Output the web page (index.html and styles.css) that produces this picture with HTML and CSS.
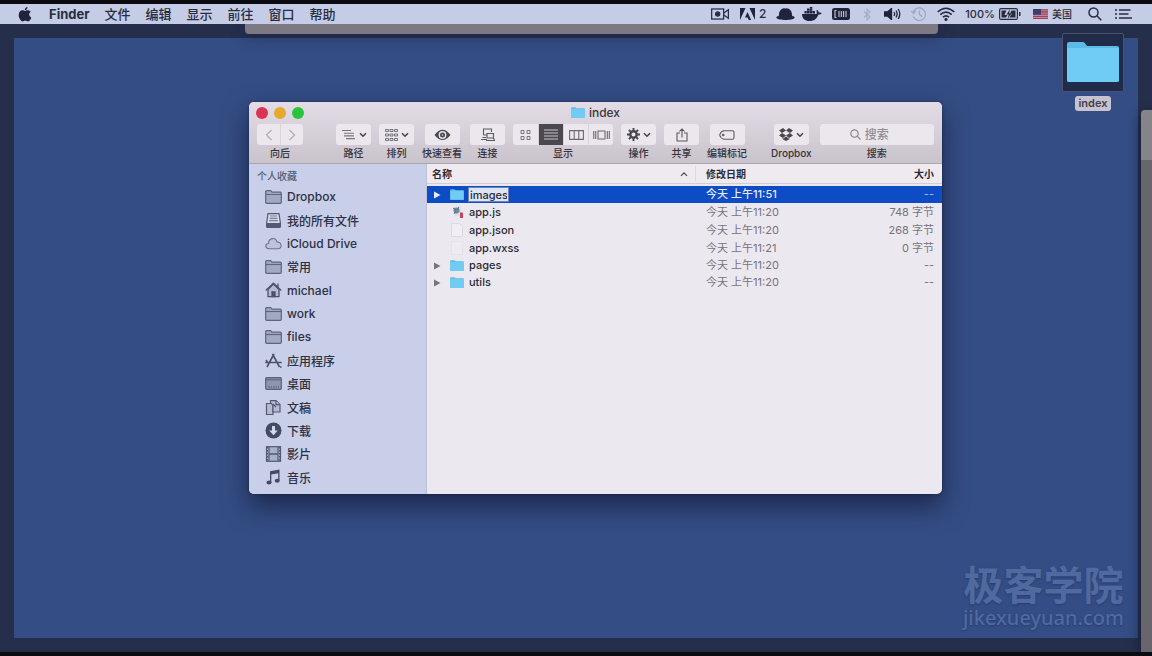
FILE: index.html
```html
<!DOCTYPE html>
<html lang="zh-CN">
<head>
<meta charset="utf-8">
<title>Finder</title>
<link rel="stylesheet" href="styles.css">
</head>
<body>
<svg class="defs" aria-hidden="true">
  <symbol id="folder-blue" viewBox="0 0 54 42"><path d="M1 3q0-2 2-2h14q1.500 0 2.500 2l1.500 2H51q2 0 2 2v32q0 2-2 2H3q-2 0-2-2z" fill="#5db9e6"/><path d="M1 7h52v32q0 2-2 2H3q-2 0-2-2z" fill="#70ccf4"/></symbol>
  <symbol id="folder-side" viewBox="0 0 17 14"><path d="M.7 12.300V1.700q0-1 1-1h4l1.300 1.500h8.300q1 0 1 1v9.100q0 1-1 1H1.700q-1 0-1-1z" fill="#a2aac2" stroke="#5d667e" stroke-width="1.200"/><path d="M1 4.500h15" stroke="#5d667e" stroke-width="1.200"/></symbol>
  <symbol id="chevron" viewBox="0 0 8 6"><path d="M1 1.200l3 3 3-3" fill="none" stroke="#47444c" stroke-width="1.500"/></symbol>
</svg>

<header class="menubar">
  <nav class="menus" aria-label="菜单">
    <button class="menu apple" aria-label="Apple"><svg width="14" height="15" viewBox="0 0 14 15"><path d="M9.500 0c.1 1.700-1.200 3.100-2.700 3.200C6.700 1.700 8 .2 9.500 0zM7 4c.8 0 1.500-.7 2.900-.7 1.100 0 2.200.6 2.900 1.500-2.400 1.500-2 4.600.6 5.600-.6 1.700-2 4-3.400 4-1 0-1.400-.6-2.700-.6s-1.800.6-2.700.6C2.900 14.400.7 11 .7 8c0-3 1.800-4.700 3.700-4.700C5.600 3.300 6.400 4 7 4z" fill="#20233a"/></svg></button>
    <button class="menu app-name">Finder</button>
    <button class="menu">文件</button>
    <button class="menu">编辑</button>
    <button class="menu">显示</button>
    <button class="menu">前往</button>
    <button class="menu">窗口</button>
    <button class="menu">帮助</button>
  </nav>
  <div class="status">
    <svg width="19" height="12" viewBox="0 0 20 12" fill="none" stroke="#292c40" stroke-width="1.300"><rect x=".7" y=".7" width="12.600" height="10.600"/><circle cx="7" cy="6" r="2.200" fill="#292c40"/><path d="M13.500 5l4.800-3.500v9L13.500 7"/></svg>
    <span class="pair"><svg width="15" height="12" viewBox="0 0 15 12" fill="#20233a"><path d="M0 0h5.500L0 12zM9.500 0H15v12zM7.500 4l3.600 8H8.700l-1-2.500H5z"/></svg>2</span>
    <svg width="19" height="14" viewBox="0 0 20 14" fill="#20233a"><path d="M3 9C3 3 6 1 9 1q1 .5 2 0C14.500 1 17 4 17 9c2 .3 3 1.300 2.500 2.300C18 14 2 14 .5 11.300 0 10 1 9.300 3 9z"/></svg>
    <svg class="whale" width="20" height="14" viewBox="0 0 20 14" fill="#20233a"><path d="M0 7h14.500c.6-1 .4-2.300-.3-3.200l1-.9c1 .7 1.500 1.500 1.500 2.500 1 0 2 0 3 .6-.7 1.300-2 1.600-3.300 1.500C14.800 12 12 14 7.500 14 3 14 0 11.500 0 7zM2.500 4h2.200v2.500H2.500zM5 4h2.500v2.500H5zM7.800 4h2.500v2.500H7.800zM5 1.500h2.500v2.200H5zM7.800 1.500h2.500v2.200H7.800zM10.600 4H13v2.500h-2.400zM7.800 0h2.500v1.200H7.800z"/></svg>
    <svg width="18" height="12" viewBox="0 0 18 12"><rect width="18" height="12" rx="2.500" fill="#20233a"/><path d="M4.500 2.500H3v7h1.500M7 3v6M9.300 3v6M11.600 3v6M14 3v6" fill="none" stroke="#c3c8dd" stroke-width="1.100"/></svg>
    <svg class="slim" width="8" height="13" viewBox="0 0 8 13" fill="none" stroke="#a6acc4" stroke-width="1.100"><path d="M1 3.500l6 5.500-3 3V1l3 3-6 5.500"/></svg>
    <svg width="17" height="12" viewBox="0 0 17 12" fill="none" stroke="#20233a" stroke-width="1.300"><path d="M.5 4h3l4-3.500v11L3.500 8h-3z" fill="#20233a"/><path d="M10 4q1.300 2 0 4M12 2.500q2.300 3.500 0 7M14.200 1q3.200 5 0 10"/></svg>
    <svg width="16" height="15" viewBox="0 0 16 15" fill="none" stroke="#a0a5bb" stroke-width="1.200"><path d="M2.300 9.500A6.300 6.300 0 1 0 2.300 5M.3 4l2 2.600L4.800 4M8.300 3.500v4l3 2"/></svg>
    <svg width="18" height="14" viewBox="0 0 18 14" fill="none" stroke="#292c40" stroke-width="1.600"><path d="M.7 5q8.300-7.500 16.600 0M3.300 7.600q5.700-5 11.400 0M5.900 10.200q3.100-2.700 6.200 0"/><circle cx="9" cy="12.400" r=".8" fill="#292c40"/></svg>
    <span class="pair percent">100%<svg width="22" height="12" viewBox="0 0 22 12"><rect x=".6" y=".6" width="17.800" height="10.800" rx="1.500" fill="#c5cbe0" stroke="#292c40" stroke-width="1.200"/><path d="M2.500 2.500h5L5.500 7h3L7 9.500H2.500zM12.500 2.500h4v7h-6l2.500-4h-2zM20 4h1.500v4H20z" fill="#292c40"/><path d="M11 1L7.500 6.500h2.300L8.700 11l4-5.700h-2.500z" fill="#292c40"/></svg></span>
    <span class="pair locale"><svg width="15" height="10" viewBox="0 0 15 10"><rect width="15" height="10" fill="#c9a3b2"/><path d="M0 .8h15M0 3h15M0 5.200h15M0 7.300h15M0 9.400h15" stroke="#a43f59" stroke-width="1.300"/><rect width="8" height="5.700" fill="#3c3c75"/></svg>美国</span>
    <svg class="find" width="14" height="14" viewBox="0 0 14 14" fill="none" stroke="#292c40" stroke-width="1.500"><circle cx="5.500" cy="5.500" r="4.500"/><path d="M8.800 8.800l4.500 4.500"/></svg>
    <svg width="17" height="12" viewBox="0 0 17 12" stroke="#292c40" stroke-width="1.700"><path d="M0 2h2M4 2h11.500M0 6h2M4 6h9.500M0 10h2M4 10h13"/></svg>
  </div>
</header>

<main class="desktop">
  <div class="wallpaper"></div>
  <div class="back-window top-strip"></div>
  <div class="back-window side-strip"></div>

  <button class="desk-icon">
    <span class="desk-thumb"><svg width="54" height="42"><use href="#folder-blue"/></svg></span>
    <span class="desk-label">index</span>
  </button>

  <div class="watermark"><span class="wm-name">极客学院</span><span class="wm-site">jikexueyuan.com</span></div>

  <section class="window" aria-label="index">
    <div class="chrome">
      <div class="titlebar">
        <div class="lights">
          <button class="light close" aria-label="关闭"></button>
          <button class="light minimise" aria-label="最小化"></button>
          <button class="light zoom" aria-label="缩放"></button>
        </div>
        <h1 class="title"><svg width="14" height="11"><use href="#folder-blue"/></svg>index</h1>
      </div>
      <div class="toolbar">
        <div class="tool nav-tool">
          <div class="segments">
            <button class="seg" aria-label="后退"><svg width="8" height="12" viewBox="0 0 8 12"><path d="M6.500 1L1.500 6l5 5" fill="none" stroke="#b3afb6" stroke-width="1.300"/></svg></button>
            <button class="seg" aria-label="前进"><svg width="8" height="12" viewBox="0 0 8 12"><path d="M1.500 1l5 5-5 5" fill="none" stroke="#b3afb6" stroke-width="1.300"/></svg></button>
          </div>
          <span>向后</span>
        </div>
        <div class="tool"><button class="btn" aria-label="路径"><svg width="15" height="11" viewBox="0 0 15 11"><path d="M1 1.500h9M3 4.200h10M3 6.900h10M5 9.600h9" stroke="#77747c" stroke-width="1.100"/></svg><svg width="8" height="6"><use href="#chevron"/></svg></button><span>路径</span></div>
        <div class="tool"><button class="btn" aria-label="排列"><svg width="13" height="12" viewBox="0 0 13 12" fill="none" stroke="#77747c"><path d="M.5.500h3v2h-3zM5 .5h3v2H5zM9.500.500h3v2h-3zM.5 5h3v2h-3zM5 5h3v2H5zM9.500 5h3v2h-3zM.5 9.500h3v2h-3zM5 9.500h3v2H5zM9.500 9.500h3v2h-3z"/></svg><svg width="8" height="6"><use href="#chevron"/></svg></button><span>排列</span></div>
        <div class="tool"><button class="btn" aria-label="快速查看"><svg width="17" height="12" viewBox="0 0 17 12"><path d="M.5 6Q8.500-4.500 16.500 6 8.500 16 .5 6z" fill="#4a474f"/><circle cx="8.500" cy="6" r="3.900" fill="#e9e5eb"/><circle cx="8.500" cy="6" r="2.500" fill="#4a474f"/><circle cx="8.500" cy="6" r=".8" fill="#e9e5eb"/></svg></button><span>快速查看</span></div>
        <div class="tool"><button class="btn" aria-label="连接"><svg width="15" height="14" viewBox="0 0 15 14" fill="none" stroke="#5c5961" stroke-width="1.100"><path d="M3.500 7V1h8v3M3.500 7H7M1 11.500h6M2.500 9.500H6M7 5.500h6.500v4.500H7zM6 12.500h8.500L13.500 10"/></svg></button><span>连接</span></div>
        <div class="tool">
          <div class="segments">
            <button class="seg" aria-label="图标"><svg width="11" height="10" viewBox="0 0 11 10" fill="none" stroke="#77747c"><path d="M1 .5h3v3H1zM7 .5h3v3H7zM1 6.500h3v3H1zM7 6.500h3v3H7z"/></svg></button>
            <button class="seg active" aria-label="列表" aria-pressed="true"><svg width="14" height="11" viewBox="0 0 14 11"><path d="M0 1h14M0 4h14M0 7h14M0 10h14" stroke="#c8c4cb" stroke-width="1.200"/></svg></button>
            <button class="seg" aria-label="分栏"><svg width="15" height="10" viewBox="0 0 15 10" fill="none" stroke="#6c6971" stroke-width="1.100"><path d="M.6.600h13.800v8.800H.6zM5.200.500v9M9.800.500v9"/></svg></button>
            <button class="seg" aria-label="封面流"><svg width="17" height="10" viewBox="0 0 17 10" fill="none" stroke="#6c6971" stroke-width="1.100"><path d="M5 1h7v8H5zM.7 1v8M2.700 1v8M14.300 1v8M16.300 1v8"/></svg></button>
          </div>
          <span>显示</span>
        </div>
        <div class="tool"><button class="btn" aria-label="操作"><svg width="13" height="13" viewBox="0 0 13 13" fill="none" stroke="#4a474f"><circle cx="6.500" cy="6.500" r="3.200" stroke-width="2.400"/><path d="M6.500 0v3M6.500 10v3M0 6.500h3M10 6.500h3M1.900 1.900L4 4M9 9l2.100 2.100M1.900 11.100L4 9M9 4l2.100-2.100" stroke-width="1.900"/></svg><svg width="8" height="6"><use href="#chevron"/></svg></button><span>操作</span></div>
        <div class="tool"><button class="btn" aria-label="共享"><svg width="12" height="14" viewBox="0 0 12 14" fill="none" stroke="#5c5961" stroke-width="1.100"><path d="M4 5H1v8h10V5H8M6 9.500V1M3.500 3.300L6 .9l2.500 2.400"/></svg></button><span>共享</span></div>
        <div class="tool tag-tool"><button class="btn" aria-label="编辑标记"><svg width="16" height="10" viewBox="0 0 16 10" fill="none" stroke="#5c5961" stroke-width="1.100"><path d="M5 .7h8.500q1.500 0 1.500 1.500v5.600q0 1.500-1.500 1.500H5Q1.500 8.500.7 5 1.500 1.500 5 .7z"/><circle cx="4.200" cy="5" r=".7"/></svg></button><span>编辑标记</span></div>
        <div class="tool"><button class="btn" aria-label="Dropbox"><svg width="14" height="13" viewBox="0 0 14 13" fill="#4a474f"><path d="M4 0l3 2.400L3 5 0 2.500zM10 0l4 2.500L11 5 7 2.400zM0 7.500L3 5l4 2.600L4 10zM11 5l3 2.500L10 10 7 7.600zM7 8.500l3 2.300.8-.4v.6L7 13l-3.800-2v-.6l.8.400z"/></svg><svg width="8" height="6"><use href="#chevron"/></svg></button><span>Dropbox</span></div>
        <div class="tool search-tool">
          <div class="search-field"><svg width="11" height="11" viewBox="0 0 11 11" fill="none" stroke="#8c8890" stroke-width="1.200"><circle cx="4.500" cy="4.500" r="3.700"/><path d="M7.200 7.200l3.300 3.300"/></svg><input id="search" class="search-input" type="text" placeholder="搜索"></div>
          <label for="search">搜索</label>
        </div>
      </div>
    </div>

    <div class="content">
      <aside class="sidebar">
        <h2 class="side-title">个人收藏</h2>
        <ul class="side-list">
          <li><a class="side-link" href="#"><svg width="17" height="14"><use href="#folder-side"/></svg>Dropbox</a></li>
          <li><a class="side-link" href="#"><svg width="17" height="15" viewBox="0 0 17 15" fill="none" stroke="#535b72" stroke-width="1.200"><path d="M3 .7h11l1.300 8.800v3.800q0 1-1 1H2.700q-1 0-1-1V9.500z" fill="#d3d8ea"/><path d="M1.700 10.500h13.600v3q0 .8-.8.800h-12q-.8 0-.8-.8z" fill="#535b72"/><path d="M5 3h7M4.600 5.300h7.800M4.200 7.600h8.600" stroke="#7a829a"/></svg>我的所有文件</a></li>
          <li><a class="side-link" href="#"><svg width="17" height="13" viewBox="0 0 17 13"><path d="M4 11.800C-.5 11.500 0 6.500 3.500 6.500 3.500 1 10.500-.5 12 5c4.800-.3 5.500 6.300 1.500 6.800z" fill="#bcc3da" stroke="#6c758e" stroke-width="1.100"/></svg>iCloud Drive</a></li>
          <li><a class="side-link" href="#"><svg width="17" height="14"><use href="#folder-side"/></svg>常用</a></li>
          <li><a class="side-link" href="#"><svg width="17" height="16" viewBox="0 0 17 16" fill="none" stroke="#4b536b" stroke-width="1.300"><path d="M3 7.500v7.200h11V7.500L8.500 2z" fill="#b4bbd2"/><path d="M.7 8.500l7.800-7.300 7.800 7.300M13 5V1.500"/><path d="M7 10h3v4.700H7z" fill="#4b536b"/></svg>michael</a></li>
          <li><a class="side-link" href="#"><svg width="17" height="14"><use href="#folder-side"/></svg>work</a></li>
          <li><a class="side-link" href="#"><svg width="17" height="14"><use href="#folder-side"/></svg>files</a></li>
          <li><a class="side-link" href="#"><svg width="17" height="15" viewBox="0 0 17 15" fill="none" stroke="#4b536b" stroke-width="1.600"><path d="M2 14L9 1M7.500 1l7 13M.3 9.500h16.400M1 7l1.500 2.500M15 14h1.500"/></svg>应用程序</a></li>
          <li><a class="side-link" href="#"><svg width="17" height="13" viewBox="0 0 17 13"><rect x=".7" y=".7" width="15.600" height="11.600" rx="1" fill="#8d96b0" stroke="#596179" stroke-width="1.200"/><path d="M1 2.800h15" stroke="#596179"/><path d="M3 10h11" stroke="#505870" stroke-width="1.200" stroke-dasharray="1.500 1"/></svg>桌面</a></li>
          <li><a class="side-link" href="#"><svg width="17" height="15" viewBox="0 0 17 15" fill="#b4bbd2" stroke="#535b72" stroke-width="1.200"><path d="M1.500 3.500H8v11H1.500z"/><path d="M5.500.700H11l4 3.800V12H8V5l-2.500-2z"/><path d="M11 .7v4h4M8 4l3 3"/></svg>文稿</a></li>
          <li><a class="side-link" href="#"><svg width="17" height="17" viewBox="0 0 17 17"><circle cx="8.500" cy="8.500" r="8" fill="#434b62"/><path d="M7 4h3v4.500h2.700l-4.200 4.700-4.200-4.700H7z" fill="#d2d8eb"/></svg>下载</a></li>
          <li><a class="side-link" href="#"><svg width="17" height="16" viewBox="0 0 17 16"><rect x="1.500" y=".7" width="14" height="14.600" fill="#a9b1c9" stroke="#535b72" stroke-width="1.200"/><path d="M4 1v14M13 1v14" stroke="#535b72" stroke-width="1.200"/><path d="M4 8h9" stroke="#535b72" stroke-width="1.500"/><path d="M2.500 1v14M14.500 1v14" stroke="#535b72" stroke-dasharray="1.500 1.500"/></svg>影片</a></li>
          <li><a class="side-link" href="#"><svg width="17" height="16" viewBox="0 0 17 16" fill="#434b62"><path d="M5 2.300L14.500.500v11h-1.300V4.300L6.300 5.600V14H5z"/><ellipse cx="4" cy="13.500" rx="2.500" ry="2"/><ellipse cx="12.200" cy="11.800" rx="2.500" ry="2"/></svg>音乐</a></li>
        </ul>
      </aside>

      <div class="files">
        <table class="file-table">
          <thead>
            <tr>
              <th class="col-name"><span class="sort">名称<svg width="8" height="6" viewBox="0 0 8 6"><path d="M1 4.800l3-3 3 3" fill="none" stroke="#4a474f" stroke-width="1.200"/></svg></span></th>
              <th class="col-date">修改日期</th>
              <th class="col-size">大小</th>
            </tr>
          </thead>
          <tbody>
            <tr class="folder selected">
              <td><span class="name"><svg class="disclose" width="8" height="8" viewBox="0 0 8 8"><path d="M1 .5L7.500 4 1 7.500z"/></svg><svg class="kind" width="14" height="11"><use href="#folder-blue"/></svg><input class="rename" aria-label="名称" value="images"></span></td>
              <td class="date">今天 上午11:51</td><td class="size">--</td>
            </tr>
            <tr>
              <td><span class="name"><svg class="disclose" width="8" height="8"></svg><svg class="kind" width="14" height="14" viewBox="0 0 14 14"><path d="M4 2l5-1 2 2v8H5z" fill="#d9dfe6"/><circle cx="6.500" cy="5.500" r="3" fill="#718a9e"/><path d="M3 3l3 2M9 2L7 5M4 9l2-3" stroke="#53748d"/><path d="M10 7.500h3V13h-3z" fill="#c9455f"/></svg>app.js</span></td>
              <td class="date">今天 上午11:20</td><td class="size">748 字节</td>
            </tr>
            <tr>
              <td><span class="name"><svg class="disclose" width="8" height="8"></svg><svg class="kind" width="14" height="14" viewBox="0 0 14 14"><path d="M1.500.500h8l3 3v10h-11z" fill="#f1edf2" stroke="#dedae1"/></svg>app.json</span></td>
              <td class="date">今天 上午11:20</td><td class="size">268 字节</td>
            </tr>
            <tr>
              <td><span class="name"><svg class="disclose" width="8" height="8"></svg><svg class="kind" width="14" height="14" viewBox="0 0 14 14"><path d="M1.500.500h8l3 3v10h-11z" fill="#efebf1" stroke="#e6e2e9"/></svg>app.wxss</span></td>
              <td class="date">今天 上午11:21</td><td class="size">0 字节</td>
            </tr>
            <tr class="folder">
              <td><span class="name"><svg class="disclose" width="8" height="8" viewBox="0 0 8 8"><path d="M1 .5L7.500 4 1 7.500z"/></svg><svg class="kind" width="14" height="11"><use href="#folder-blue"/></svg>pages</span></td>
              <td class="date">今天 上午11:20</td><td class="size">--</td>
            </tr>
            <tr class="folder">
              <td><span class="name"><svg class="disclose" width="8" height="8" viewBox="0 0 8 8"><path d="M1 .5L7.500 4 1 7.500z"/></svg><svg class="kind" width="14" height="11"><use href="#folder-blue"/></svg>utils</span></td>
              <td class="date">今天 上午11:20</td><td class="size">--</td>
            </tr>
          </tbody>
        </table>
      </div>
    </div>
  </section>
</main>
</body>
</html>
```
FILE: styles.css
```css
* { box-sizing: border-box; }

body {
  margin: 0;
  min-height: 100vh;
  display: flex;
  flex-direction: column;
  padding: 4px 0;
  background: #0c0b12;
  color: #2b2a36;
  font-family: Inter, "Noto Sans CJK SC", sans-serif;
  font-size: 12px;
  font-weight: 500;
  overflow: hidden;
}

button, input {
  font: inherit;
  color: inherit;
  border: 0;
  padding: 0;
  margin: 0;
  background: none;
}

svg { display: block; flex: none; }
.defs { position: absolute; width: 0; height: 0; }

/* Menu bar */
.menubar {
  display: flex;
  justify-content: space-between;
  align-items: center;
  height: 20px;
  padding: 0 20px 0 18px;
  background: #c5cce5;
  color: #292c40;
}
.menus { display: flex; align-items: center; gap: 15px; }
.menu { font-size: 13px; line-height: 20px; white-space: nowrap; }
.apple { margin-right: 2px; }
.app-name { font-weight: 700; }
.status { display: flex; align-items: center; gap: 10px; }
.status .slim { margin: 0 3px; }
.whale { margin-left: -3px; }
.pair { display: flex; align-items: center; gap: 4px; line-height: 20px; white-space: nowrap; }
.percent { font-size: 11px; }
.locale { font-size: 10px; margin: 0 6px 0 2px; }
.find { margin-right: 3px; }

/* Desktop */
.desktop {
  position: relative;
  flex: 1;
  display: flex;
  padding: 14px;
  background: #252f4c;
  overflow: hidden;
}
.wallpaper { flex: 1; background: #344d84; }
.back-window { position: absolute; background: #7d7982; }
.top-strip { left: 245px; top: 0; width: 693px; height: 10px; border-radius: 0 0 4px 4px; box-shadow: 0 3px 14px rgba(20, 25, 55, .5); }
.side-strip { left: 1141px; right: 0; top: 86px; bottom: 0; border-radius: 4px 0 0 0; box-shadow: 0 4px 12px rgba(12, 15, 35, .7); background: linear-gradient(#87838b 50px, #68656d 50px); }

.desk-icon {
  position: absolute;
  right: 28px;
  top: 9px;
  display: flex;
  flex-direction: column;
  align-items: center;
  gap: 4px;
}
.desk-thumb { padding: 7px 3px 8px; border: 1px solid #49516b; background: #202b4a; border-radius: 2px; }
.desk-label { padding: 0 3px; border-radius: 3px; background: #c6c3ce; color: #3f3e50; font-size: 11px; line-height: 15px; font-weight: 600; }

.watermark {
  position: absolute;
  right: 28px;
  bottom: 24px;
  display: flex;
  flex-direction: column;
  align-items: center;
  color: #506a9f;
  text-shadow: 0 1px 2px #293d70;
}
.wm-name { font-size: 40px; line-height: 44px; font-weight: 700; }
.wm-site { font-family: "Noto Sans", sans-serif; font-size: 20px; line-height: 20px; }

/* Finder window */
.window {
  position: absolute;
  left: 249px;
  top: 78px;
  width: 693px;
  height: 392px;
  display: flex;
  flex-direction: column;
  border-radius: 5px;
  background: #ece8ef;
  box-shadow: 0 12px 26px rgba(15, 20, 45, .65), 0 0 3px rgba(15, 20, 45, .5);
  overflow: hidden;
}
.chrome { background: linear-gradient(#e3dce6, #c9c3cc); border-bottom: 1px solid #aba6b0; }
.titlebar { display: grid; grid-template-columns: 1fr auto 1fr; align-items: center; height: 21px; padding: 0 7px; }
.lights { display: flex; gap: 6px; }
.light { width: 12px; height: 12px; border-radius: 50%; }
.close { background: #dc3450; }
.minimise { background: #e5aa2b; }
.zoom { background: #2ac53d; }
.title { display: flex; align-items: center; gap: 4px; margin: 0; font-size: 12px; font-weight: 500; line-height: 20px; color: #39363e; }

.toolbar { display: flex; gap: 8px; padding: 1px 8px 2px 8px; }
.tool { display: flex; flex-direction: column; align-items: center; font-size: 10px; line-height: 16px; white-space: nowrap; color: #35323a; }
.nav-tool { margin-right: 25px; }
.tag-tool { margin-right: 16px; }
.btn { display: flex; align-items: center; justify-content: center; gap: 3px; width: 35px; height: 21px; border-radius: 3px; background: #ebe7ec; }
.segments { display: flex; height: 21px; border-radius: 3px; background: #ebe7ec; overflow: hidden; }
.seg { display: flex; align-items: center; justify-content: center; width: 25px; border-left: 1px solid #d8d3da; }
.seg:first-child { border-left: 0; }
.nav-tool .seg { width: 23px; }
.active { background: #4b484f; }
.search-tool { flex: 1; min-width: 0; }
.search-field { display: flex; align-items: center; gap: 4px; width: 100%; height: 21px; padding-left: 30px; border-radius: 3px; background: #ebe7ec; }
.search-input { flex: 1; width: 0; min-width: 0; font-size: 12px; line-height: 20px; outline: 0; }
.search-input::placeholder { color: #918d95; opacity: 1; }

.content { flex: 1; display: flex; min-height: 0; }
.sidebar { display: flex; flex-direction: column; width: 178px; padding: 3px 8px 5px; background: #c9cfe8; border-right: 1px solid #bdc1d6; }
.side-title { margin: 0; font-size: 10px; line-height: 18px; font-weight: 500; color: #555c74; }
.side-list { flex: 1; display: grid; grid-auto-rows: 1fr; margin: 0; padding: 0; list-style: none; }
.side-link { display: flex; align-items: center; gap: 5px; height: 100%; padding-left: 8px; color: #2c3145; text-decoration: none; white-space: nowrap; }

/* File list */
.files { flex: 1; min-width: 0; }
.file-table { width: 100%; table-layout: fixed; border-collapse: separate; border-spacing: 0; font-size: 11px; }
.file-table th { height: 20px; padding: 0; border-bottom: 1px solid #d2ced6; font-size: 10px; font-weight: 600; text-align: left; background: #eeeaf0; }
.file-table tbody::before { content: ""; display: block; height: 2px; }
.col-name { width: auto; }
.sort { display: flex; align-items: center; justify-content: space-between; padding: 0 7px 0 5px; border-right: 1px solid #dcd8e0; }
.file-table .col-date { width: 163px; padding-left: 10px; }
.file-table .col-size { width: 83px; padding-right: 8px; text-align: right; }
.file-table td { height: 18px; padding: 0; line-height: 17px; white-space: nowrap; }
.file-table .folder td { height: 17px; }
.file-table .date { padding-left: 10px; color: #77747d; font-weight: 400; }
.file-table .size { padding-right: 8px; text-align: right; color: #77747d; font-weight: 400; }
.name { display: flex; align-items: center; padding-left: 6px; }
.disclose { margin-right: 9px; fill: #77747d; }
.kind { margin-right: 5px; }
.file-table .selected td { background: #0d4cc4; color: #e6ebfa; font-weight: 500; }
.file-table .selected .size { color: #9fb6e6; }
.selected .disclose { fill: #e6ebfa; }
.rename { width: 41px; height: 15px; margin-left: -1px; padding: 0 1px; border: 1px solid #6d83b8; background: #dde4f2; color: #2b2a36; line-height: 13px; outline: 0; }
```
